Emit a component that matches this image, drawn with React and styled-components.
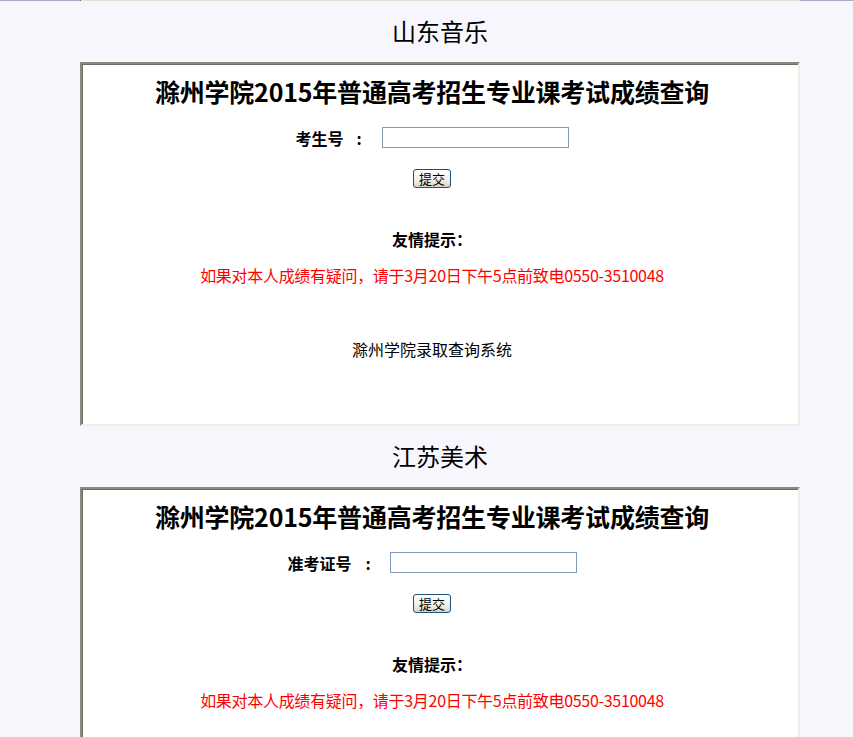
import React from 'react';
import styled, { createGlobalStyle } from 'styled-components';

const GlobalStyle = createGlobalStyle`
  body {
    margin: 0;
    background: #f8f6fd;
    font-family: "Noto Sans CJK SC", "Liberation Serif", serif;
    color: #000;
  }
`;

const TopEdge = styled.div`
  height: 1px;
  background: #a7abc3;
`;

const TopEdgeInner = styled.div`
  margin-left: 80px;
  width: 720px;
  height: 1px;
  background: #dfe2d8;
  border-left: 1px solid #707068;
  box-sizing: border-box;
`;

const Wrapper = styled.div`
  margin-left: 80px;
  width: 720px;
`;

const SectionTitle = styled.div`
  padding: 15px 0 16px;
  text-align: center;
  font-size: 24px;
  line-height: 30px;
`;

const Card = styled.div`
  background: #fff;
  border-style: solid;
  border-width: 2px;
  border-color: #8a8980 #f0eee2 #f0eee2 #8a8980;
  box-shadow: inset 1px 1px 0 #6e6d66;
  padding: 12px 16px 65px 0;
  display: flex;
  flex-direction: column;
  align-items: center;
`;

const CardTitle = styled.div`
  font-size: 25px;
  font-weight: bold;
  line-height: 30px;
  letter-spacing: -0.2px;
`;

const FormRow = styled.div`
  margin-top: 21px;
  display: flex;
  align-items: center;
  height: 21px;
`;

const Label = styled.span`
  font-size: 16px;
  font-weight: bold;
  white-space: pre;
`;

const Colon = styled.span`
  font-size: 16px;
  font-weight: bold;
  margin: 0 ${(p) => p.gap}px 0 ${(p) => p.lead}px;
`;

const Input = styled.input`
  box-sizing: border-box;
  width: 187px;
  height: 21px;
  border: 1px solid #7f9db9;
  padding: 0 3px;
  margin: 0;
  outline: none;
`;

const SubmitButton = styled.button`
  margin-top: 21px;
  box-sizing: border-box;
  width: 38px;
  height: 19px;
  padding: 0;
  border: 1px solid #1e4f7e;
  border-radius: 3px;
  background: linear-gradient(#ffffff, #f0efe8 60%, #d8d4c8);
  font-family: "Noto Sans CJK SC", sans-serif;
  font-size: 13px;
  line-height: 17px;
  color: #000;
`;

const TipTitle = styled.div`
  margin-top: 41px;
  font-size: 16px;
  font-weight: bold;
  line-height: 20px;
`;

const TipText = styled.div`
  margin-top: 16px;
  font-size: 16px;
  line-height: 20px;
  color: #ff0000;
  letter-spacing: -0.3px;
`;

const Footer = styled.div`
  margin-top: 54px;
  font-size: 16px;
  line-height: 20px;
`;

const sections = [
  { name: '山东音乐', label: '考生号', lead: 13, gap: 20 },
  { name: '江苏美术', label: '准考证号', lead: 14, gap: 19 },
];

const QueryCard = ({ label, lead, gap }) => (
  <Card>
    <CardTitle>滁州学院2015年普通高考招生专业课考试成绩查询</CardTitle>
    <FormRow>
      <Label>{label}</Label>
      <Colon lead={lead} gap={gap}>:</Colon>
      <Input type="text" />
    </FormRow>
    <SubmitButton type="button">提交</SubmitButton>
    <TipTitle>友情提示：</TipTitle>
    <TipText>如果对本人成绩有疑问，请于3月20日下午5点前致电0550-3510048</TipText>
    <Footer>滁州学院录取查询系统</Footer>
  </Card>
);

export default function App() {
  return (
    <>
      <GlobalStyle />
      <TopEdge>
        <TopEdgeInner />
      </TopEdge>
      <Wrapper>
        {sections.map((s) => (
          <React.Fragment key={s.name}>
            <SectionTitle>{s.name}</SectionTitle>
            <QueryCard label={s.label} lead={s.lead} gap={s.gap} />
          </React.Fragment>
        ))}
      </Wrapper>
    </>
  );
}
